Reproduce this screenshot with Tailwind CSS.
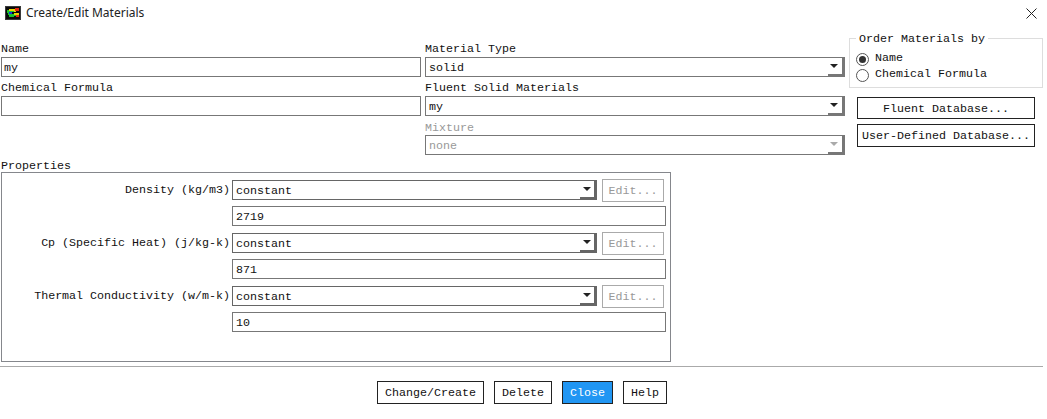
<!DOCTYPE html>
<html lang="en">
<head>
<meta charset="UTF-8">
<title>Create/Edit Materials</title>
<script src="https://cdn.jsdelivr.net/npm/@tailwindcss/browser@4"></script>
</head>
<body class="bg-white w-[1047px] h-[419px] overflow-hidden font-['Liberation_Mono',monospace] text-[11.67px] text-[#111]">
  <!-- title bar -->
  <div class="h-[26px] flex items-center pl-[5px] pr-[10px]">
    <svg width="16" height="14" viewBox="0 0 16 14" class="mr-[5px]">
      <rect width="16" height="14" fill="#3a3a3a"/>
      <rect x="1" y="1" width="14" height="12" fill="#0a0a0a"/>
      <path d="M2 4h7v2H7v2h7v2H9v1H4V9H3V7H2z" fill="#19c22c"/>
      <path d="M4 3h7v3H9V5H4zM9 7h5v2H9z" fill="#e8d800"/>
      <path d="M4 6h3v2H4z" fill="#1a2fe0"/>
      <path d="M10 2h4v3h-4zM11 9h3v2h-3z" fill="#e02a10"/>
    </svg>
    <span class="font-['Noto_Sans',sans-serif] text-[12px] text-[#222]">Create/Edit Materials</span>
    <svg width="11" height="11" viewBox="0 0 11 11" class="ml-auto"><path d="M.5.5l10 10M10.5.5l-10 10" stroke="#222" fill="none"/></svg>
  </div>

  <div class="flex pt-[12px] h-[129px]">
    <!-- name / formula -->
    <div class="w-[420px] ml-[1px] pt-[4px]">
      <div class="h-[15px] leading-[15px]">Name</div>
      <div class="h-[20px] border border-[#777] pl-[2px] leading-[20px]">my</div>
      <div class="h-[19px] leading-[22px]">Chemical Formula</div>
      <div class="h-[20px] border border-[#777]"></div>
    </div>
    <!-- material type -->
    <div class="w-[420px] ml-[4px] pt-[4px]">
      <div class="h-[15px] leading-[15px]">Material Type</div>
      <div class="h-[20px] border border-[#777] pl-[3px] leading-[20px] flex justify-between">solid
        <span class="w-[16px] h-[18px] border-r-2 border-b-2 border-[#777] flex items-center justify-center pr-[2px]"><span class="w-0 h-0 border-x-[4px] border-x-transparent border-t-[4px] border-t-[#222]"></span></span>
      </div>
      <div class="h-[19px] leading-[22px]">Fluent Solid Materials</div>
      <div class="h-[20px] border border-[#777] pl-[3px] leading-[20px] flex justify-between">my
        <span class="w-[16px] h-[18px] border-r-2 border-b-2 border-[#777] flex items-center justify-center pr-[2px]"><span class="w-0 h-0 border-x-[4px] border-x-transparent border-t-[4px] border-t-[#222]"></span></span>
      </div>
      <div class="h-[19px] leading-[24px] text-[#999]">Mixture</div>
      <div class="h-[20px] border border-[#777] pl-[3px] leading-[20px] flex justify-between text-[#999]">none
        <span class="w-[16px] h-[18px] border-r-2 border-b-2 border-[#777] flex items-center justify-center pr-[2px]"><span class="w-0 h-0 border-x-[4px] border-x-transparent border-t-[4px] border-t-[#aaa]"></span></span>
      </div>
    </div>
    <!-- order + databases -->
    <div class="w-[194px] ml-[4px]">
      <div class="relative h-[50px] border border-[#ddd] pt-[12px] pl-[6px]">
        <span class="absolute left-[6px] top-[-6px] bg-white px-[3px] leading-[13px]">Order Materials by</span>
        <div class="flex items-center h-[16px] gap-[6px]">
          <span class="w-[13px] h-[13px] rounded-full border border-[#555] flex items-center justify-center"><span class="w-[7px] h-[7px] rounded-full bg-[#333]"></span></span>Name
        </div>
        <div class="flex items-center h-[16px] gap-[6px]">
          <span class="w-[13px] h-[13px] rounded-full border border-[#555]"></span>Chemical Formula
        </div>
      </div>
      <div class="ml-[8px] mt-[9px] w-[178px] flex flex-col gap-[5px]">
        <div class="h-[22px] border border-[#222] flex items-center justify-center pt-[3px]">Fluent Database...</div>
        <div class="h-[23px] border border-[#222] flex items-center justify-center pt-[2px]">User-Defined Database...</div>
      </div>
    </div>
  </div>

  <!-- properties -->
  <div class="pl-[1px] h-[17px] leading-[22px]">Properties</div>
  <div class="ml-[1px] w-[670px] h-[190px] border border-[#85878c] pt-[7px]">
    <div class="flex flex-col gap-[7px]">
      <div>
        <div class="flex items-center h-[20px]">
          <div class="w-[229px] text-right pr-[1px] pt-[2px]">Density (kg/m3)</div>
          <div class="w-[365px] ml-[1px] h-[20px] border border-[#666] pl-[3px] leading-[20px] flex justify-between">constant
            <span class="w-[16px] h-[18px] border-r-2 border-b-2 border-[#666] flex items-center justify-center pr-[1px]"><span class="w-0 h-0 border-x-[4px] border-x-transparent border-t-[4px] border-t-[#222]"></span></span>
          </div>
          <div class="w-[62px] h-[23px] ml-[5px] border border-[#aaa] text-[#999] flex items-center justify-center pt-[3px]">Edit...</div>
        </div>
        <div class="ml-[230px] w-[434px] h-[20px] mt-[6px] border border-[#777] pl-[3px] leading-[20px]">2719</div>
      </div>
      <div>
        <div class="flex items-center h-[20px]">
          <div class="w-[229px] text-right pr-[1px] pt-[2px]">Cp (Specific Heat) (j/kg-k)</div>
          <div class="w-[365px] ml-[1px] h-[20px] border border-[#666] pl-[3px] leading-[20px] flex justify-between">constant
            <span class="w-[16px] h-[18px] border-r-2 border-b-2 border-[#666] flex items-center justify-center pr-[1px]"><span class="w-0 h-0 border-x-[4px] border-x-transparent border-t-[4px] border-t-[#222]"></span></span>
          </div>
          <div class="w-[62px] h-[23px] ml-[5px] border border-[#aaa] text-[#999] flex items-center justify-center pt-[3px]">Edit...</div>
        </div>
        <div class="ml-[230px] w-[434px] h-[20px] mt-[6px] border border-[#777] pl-[3px] leading-[20px]">871</div>
      </div>
      <div>
        <div class="flex items-center h-[20px]">
          <div class="w-[229px] text-right pr-[1px] pt-[2px]">Thermal Conductivity (w/m-k)</div>
          <div class="w-[365px] ml-[1px] h-[20px] border border-[#666] pl-[3px] leading-[20px] flex justify-between">constant
            <span class="w-[16px] h-[18px] border-r-2 border-b-2 border-[#666] flex items-center justify-center pr-[1px]"><span class="w-0 h-0 border-x-[4px] border-x-transparent border-t-[4px] border-t-[#222]"></span></span>
          </div>
          <div class="w-[62px] h-[23px] ml-[5px] border border-[#aaa] text-[#999] flex items-center justify-center pt-[3px]">Edit...</div>
        </div>
        <div class="ml-[230px] w-[434px] h-[20px] mt-[6px] border border-[#777] pl-[3px] leading-[20px]">10</div>
      </div>
    </div>
  </div>

  <div class="w-[1043px] h-px bg-[#aaa] mt-[4px]"></div>

  <!-- action buttons -->
  <div class="flex gap-[10px] ml-[377px] mt-[14px]">
    <div class="w-[107px] h-[23px] border border-[#222] flex items-center justify-center pt-[2px]">Change/Create</div>
    <div class="w-[58px] h-[23px] border border-[#222] flex items-center justify-center pt-[2px]">Delete</div>
    <div class="w-[51px] h-[23px] border border-[#222] bg-[#2196f3] text-white flex items-center justify-center pt-[2px]">Close</div>
    <div class="w-[44px] h-[23px] border border-[#222] flex items-center justify-center pt-[2px]">Help</div>
  </div>
</body>
</html>
